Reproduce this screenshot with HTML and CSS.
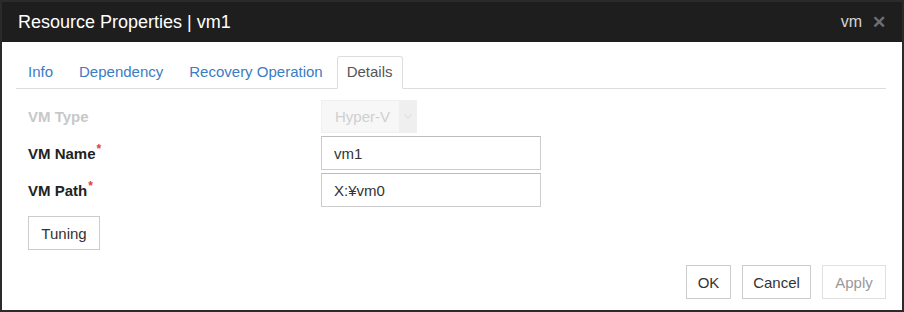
FILE: index.html
```html
<!DOCTYPE html>
<html lang="en">
<head>
    <meta charset="UTF-8">
    <meta name="viewport" content="width=device-width, initial-scale=1.0">
    <title>Resource Properties</title>
    <link rel="stylesheet" href="styles.css">
</head>
<body>
    <div class="dialog">
        <div class="dialog-header">
            <span class="dialog-title">Resource Properties | vm1</span>
            <span class="dialog-tools">
                <span class="dialog-type">vm</span>
                <span class="dialog-close">&#x2715;</span>
            </span>
        </div>
        <div class="dialog-body">
            <ul class="tabs">
                <li class="tab">Info</li>
                <li class="tab">Dependency</li>
                <li class="tab">Recovery Operation</li>
                <li class="tab active">Details</li>
            </ul>
            <div class="form">
                <div class="form-row disabled">
                    <label class="form-label">VM Type</label>
                    <div class="select">
                        <span class="select-value">Hyper-V</span>
                        <span class="select-arrow">
                            <svg width="8" height="5" viewBox="0 0 8 5"><path d="M0.5 0.5 L4 4 L7.5 0.5" fill="none" stroke="#d8d8d8" stroke-width="1"/></svg>
                        </span>
                    </div>
                </div>
                <div class="form-row">
                    <label class="form-label">VM Name<span class="req">*</span></label>
                    <input class="text-input" type="text" value="vm1">
                </div>
                <div class="form-row">
                    <label class="form-label">VM Path<span class="req">*</span></label>
                    <input class="text-input" type="text" value="X:¥vm0">
                </div>
                <button class="btn tuning">Tuning</button>
            </div>
            <div class="dialog-footer">
                <button class="btn ok">OK</button>
                <button class="btn cancel">Cancel</button>
                <button class="btn apply" disabled>Apply</button>
            </div>
        </div>
    </div>
</body>
</html>
```

FILE: styles.css
```css
*, *::before, *::after {
    box-sizing: border-box;
}
body {
    margin: 0;
    background: #fff;
    font-family: "Liberation Sans", Arial, sans-serif;
    font-size: 15px;
    color: #333;
}
.dialog {
    width: 904px;
    height: 312px;
    border: 2px solid #2b2b2b;
    display: flex;
    flex-direction: column;
}
.dialog-header {
    height: 40px;
    background: #1e1e1e;
    display: flex;
    align-items: center;
    justify-content: space-between;
    padding: 0 16px;
    color: #fff;
}
.dialog-title {
    font-size: 18px;
}
.dialog-tools {
    display: flex;
    align-items: center;
    gap: 10px;
}
.dialog-type {
    font-size: 16px;
    color: #d4d4d4;
}
.dialog-close {
    font-size: 17px;
    font-weight: bold;
    color: #6f6f6f;
}
.dialog-body {
    flex: 1;
    padding: 14px 16px 0 14px;
    display: flex;
    flex-direction: column;
}
.tabs {
    list-style: none;
    margin: 0;
    padding: 0;
    display: flex;
    border-bottom: 1px solid #ddd;
}
.tab {
    padding: 6px 11px 8px 11px;
    margin-bottom: -1px;
    color: #3b7cc4;
    border: 1px solid transparent;
    border-radius: 3px 3px 0 0;
    margin-right: 2px;
}
.tab.active {
    padding: 6px 9px 8px 9px;
    color: #555;
    border-color: #ddd;
    border-bottom-color: #fff;
    background: #fff;
}
.form {
    padding: 11px 0 0 12px;
    display: flex;
    flex-direction: column;
    gap: 3px;
}
.form-row {
    display: flex;
    align-items: center;
}
.form-label {
    width: 293px;
    font-weight: bold;
    font-size: 15px;
    color: #222;
}
.form-row.disabled .form-label {
    color: #c8c8c8;
}
.req {
    color: #e04040;
    font-size: 12px;
    vertical-align: top;
    position: relative;
    top: -3px;
    margin-left: 1px;
}
.select {
    display: flex;
    height: 33px;
    width: 96px;
    border: 1px solid #f0f0f0;
    background: #f7f7f7;
}
.select-value {
    flex: 1;
    display: flex;
    align-items: center;
    justify-content: center;
    color: #cfcfcf;
    font-size: 15px;
    padding-left: 4px;
}
.select-arrow {
    width: 17px;
    display: flex;
    align-items: center;
    justify-content: center;
    background: #efefef;
}
.text-input {
    width: 220px;
    height: 34px;
    border: 1px solid #ccc;
    border-top-color: #bdbdbd;
    padding: 0 12px;
    font-family: inherit;
    font-size: 15px;
    color: #333;
    outline: none;
}
.btn {
    font-family: inherit;
    font-size: 15px;
    color: #333;
    background: #fff;
    border: 1px solid #ccc;
    height: 34px;
    padding: 0;
}
.btn:disabled {
    color: #999;
    border-color: #e0e0e0;
}
.tuning {
    align-self: flex-start;
    width: 72px;
    margin-top: 6px;
}
.dialog-footer {
    margin-top: auto;
    display: flex;
    justify-content: flex-end;
    gap: 11px;
    padding: 0 0 11px 0;
}
.ok {
    width: 45px;
}
.cancel {
    width: 69px;
}
.apply {
    width: 64px;
}
```
